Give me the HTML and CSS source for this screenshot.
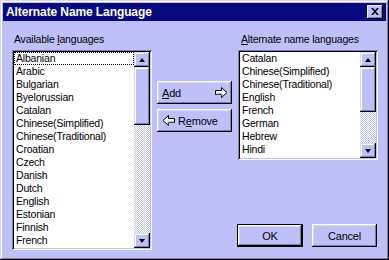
FILE: index.html
```html
<!DOCTYPE html>
<html>
<head>
<meta charset="utf-8">
<link rel="stylesheet" href="styles.css">
</head>
<body>
<div class="window">
  <div class="titlebar">
    <span class="title">Alternate Name Language</span>
    <span class="close"><svg width="8" height="7" viewBox="0 0 8 7"><path d="M0 0h2l2 2.2L6 0h2L5 3.5 8 7H6L4 4.8 2 7H0l3-3.5z" fill="#000"/></svg></span>
  </div>
  <div class="content">
    <div class="col col-left">
      <div class="label">Available <u>l</u>anguages</div>
      <div class="listbox listbox-left">
        <ul class="items">
          <li class="focus">Albanian</li>
          <li>Arabic</li>
          <li>Bulgarian</li>
          <li>Byelorussian</li>
          <li>Catalan</li>
          <li>Chinese(Simplified)</li>
          <li>Chinese(Traditional)</li>
          <li>Croatian</li>
          <li>Czech</li>
          <li>Danish</li>
          <li>Dutch</li>
          <li>English</li>
          <li>Estonian</li>
          <li>Finnish</li>
          <li>French</li>
          <li>German</li>
        </ul>
        <div class="scrollbar">
          <div class="sbtn"><span class="tri-up"></span></div>
          <div class="thumb thumb-left"></div>
          <div class="track"></div>
          <div class="sbtn"><span class="tri-down"></span></div>
        </div>
      </div>
    </div>
    <div class="col col-mid">
      <div class="btn btn-add"><span><u>A</u>dd</span>
        <svg class="arr" width="13" height="11" viewBox="0 0 13 11"><path d="M0.5 3.5H6.5V0.5L12 5.5L6.5 10.5V7.5H0.5Z" fill="#fff" stroke="#000"/><path d="M1 7h6v2.5" fill="none" stroke="#8080a8"/></svg>
      </div>
      <div class="btn btn-remove">
        <svg class="arr" width="13" height="11" viewBox="0 0 13 11"><path d="M12.5 3.5H6.5V0.5L1 5.5L6.5 10.5V7.5H12.5Z" fill="#fff" stroke="#000"/><path d="M12 7H6v2.5" fill="none" stroke="#8080a8"/></svg>
        <span>R<u>e</u>move</span>
      </div>
    </div>
    <div class="col col-right">
      <div class="label label-right"><u>A</u>lternate name languages</div>
      <div class="listbox listbox-right">
        <ul class="items">
          <li>Catalan</li>
          <li>Chinese(Simplified)</li>
          <li>Chinese(Traditional)</li>
          <li>English</li>
          <li>French</li>
          <li>German</li>
          <li>Hebrew</li>
          <li>Hindi</li>
          <li>Italian</li>
        </ul>
        <div class="scrollbar">
          <div class="sbtn"><span class="tri-up"></span></div>
          <div class="thumb thumb-right"></div>
          <div class="track"></div>
          <div class="sbtn"><span class="tri-down"></span></div>
        </div>
      </div>
      <div class="actions">
        <div class="btn btn-ok"><span>OK</span></div>
        <div class="btn btn-cancel"><span>Cancel</span></div>
      </div>
    </div>
  </div>
</div>
</body>
</html>
```
FILE: styles.css
```css
html, body {
  margin: 0;
  padding: 0;
  background: #c0c0f8;
}
body {
  font-family: "Liberation Sans", Arial, sans-serif;
  font-size: 10.5px;
  letter-spacing: -0.2px;
  color: #000;
}
.window {
  width: 389px;
  height: 260px;
  box-sizing: border-box;
  padding: 3px;
  background: #c0c0f8;
  box-shadow: inset -1px -1px #000, inset 1px 1px #d8d8ff, inset -2px -2px #7c7ca8, inset 2px 2px #fff;
  display: flex;
  flex-direction: column;
}
.titlebar {
  height: 18px;
  background: #0a0a80;
  display: flex;
  align-items: center;
  justify-content: space-between;
  padding: 0 3px 0 3px;
}
.title {
  color: #fff;
  font-weight: bold;
  font-size: 12px;
  letter-spacing: -0.1px;
  line-height: 18px;
}
.close {
  width: 16px;
  height: 14px;
  box-sizing: border-box;
  background: #c0c0f8;
  box-shadow: inset -1px -1px #000, inset 1px 1px #fff, inset -2px -2px #7c7ca8;
  display: flex;
  align-items: center;
  justify-content: center;
  padding-bottom: 1px;
}
.content {
  display: flex;
  padding: 12px 0 0 9px;
  flex: 1;
}
.col {
  display: flex;
  flex-direction: column;
}
.col-left { width: 140px; }
.col-mid { width: 75px; margin-left: 5px; padding-top: 48px; gap: 5px; }
.col-right { width: 141px; margin-left: 5px; }
.label {
  height: 13px;
  line-height: 13px;
  padding-left: 2px;
  margin-bottom: 4px;
  white-space: nowrap;
}
.label-right { padding-left: 4px; }
.listbox {
  box-sizing: border-box;
  width: 140px;
  background: #fff;
  box-shadow: inset 1px 1px #7c7ca8, inset -1px -1px #fff, inset 2px 2px #000, inset -2px -2px #c0c0f8;
  padding: 2px;
  display: flex;
  overflow: hidden;
}
.listbox-left { height: 200px; }
.listbox-right { height: 110px; margin-left: 1px; }
.items {
  list-style: none;
  margin: 0;
  padding: 0;
  flex: 1;
  overflow: hidden;
}
.items li {
  height: 13px;
  line-height: 13px;
  padding-left: 2px;
  white-space: nowrap;
}
.items li.focus {
  outline: 1px dotted #000;
  outline-offset: -1px;
}
.scrollbar {
  width: 16px;
  display: flex;
  flex-direction: column;
}
.sbtn, .thumb {
  background: #c0c0f8;
  box-shadow: inset -1px -1px #000, inset 1px 1px #d8d8ff, inset -2px -2px #7c7ca8, inset 2px 2px #fff;
}
.sbtn {
  height: 15px;
  flex: none;
  display: flex;
  align-items: center;
  justify-content: center;
}
.thumb-left { height: 58px; flex: none; }
.thumb-right { height: 45px; flex: none; }
.track {
  flex: 1;
  background: repeating-conic-gradient(#fff 0 25%, #c0c0f8 0 50%) 0 0 / 2px 2px;
}
.tri-up {
  width: 0; height: 0;
  border-left: 3.5px solid transparent;
  border-right: 3.5px solid transparent;
  border-bottom: 4px solid #000;
}
.tri-down {
  width: 0; height: 0;
  border-left: 3.5px solid transparent;
  border-right: 3.5px solid transparent;
  border-top: 4px solid #000;
}
.btn {
  box-sizing: border-box;
  height: 23px;
  background: #c0c0f8;
  box-shadow: inset -1px -1px #000, inset 1px 1px #fff, inset -2px -2px #7c7ca8, inset 2px 2px #d8d8ff;
  display: flex;
  align-items: center;
  font-size: 11px;
}
.btn-add {
  justify-content: space-between;
  padding: 0 4px 0 5px;
}
.btn-remove {
  padding: 0 4px 0 5px;
  gap: 3px;
}
.actions {
  display: flex;
  gap: 9px;
  margin-top: 64px;
}
.btn-ok, .btn-cancel {
  justify-content: center;
}
.btn-ok {
  width: 66px;
  box-shadow: inset 0 0 0 1px #000, inset -2px -2px #000, inset 2px 2px #fff, inset -3px -3px #7c7ca8, inset 3px 3px #d8d8ff;
}
.btn-cancel { width: 65px; }
u { text-decoration-thickness: 1px; text-underline-offset: 1px; }
```
